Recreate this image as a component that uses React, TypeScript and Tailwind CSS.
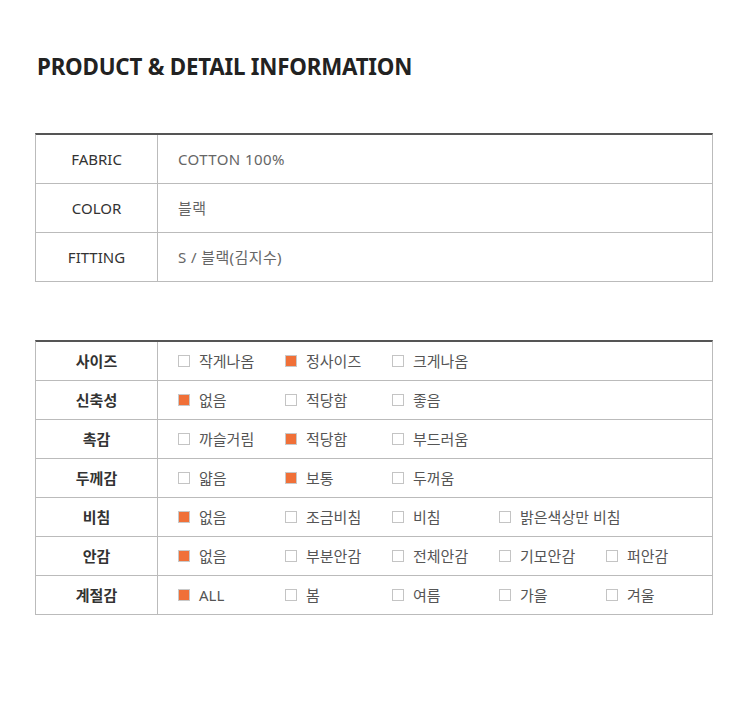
import React from "react";

const INFO = [
  { label: "FABRIC", value: "COTTON 100%" },
  { label: "COLOR", value: "블랙" },
  { label: "FITTING", value: "S / 블랙(김지수)" },
];

const DETAILS: { label: string; options: string[]; checked: number }[] = [
  { label: "사이즈", options: ["작게나옴", "정사이즈", "크게나옴"], checked: 1 },
  { label: "신축성", options: ["없음", "적당함", "좋음"], checked: 0 },
  { label: "촉감", options: ["까슬거림", "적당함", "부드러움"], checked: 1 },
  { label: "두께감", options: ["얇음", "보통", "두꺼움"], checked: 1 },
  { label: "비침", options: ["없음", "조금비침", "비침", "밝은색상만 비침"], checked: 0 },
  { label: "안감", options: ["없음", "부분안감", "전체안감", "기모안감", "퍼안감"], checked: 0 },
  { label: "계절감", options: ["ALL", "봄", "여름", "가을", "겨울"], checked: 0 },
];

const font = "font-['Noto_Sans','Noto_Sans_CJK_KR',sans-serif]";

function Check({ on }: { on: boolean }) {
  return (
    <span
      className={`inline-block shrink-0 w-[12px] h-[12px] border ${
        on ? "bg-[#f07038] border-[#c9c9c9]" : "bg-white border-[#c4c4c4]"
      }`}
    />
  );
}

export default function App() {
  return (
    <div className={`w-[750px] h-[714px] bg-white ${font}`}>
      <div className="px-[35px] pt-[51px]">
        <h1 className="pl-[2px] text-[22.3px] leading-[32px] font-bold text-[#222] tracking-[-0.2px]">
          PRODUCT &amp; DETAIL INFORMATION
        </h1>

        {/* Info table */}
        <div className="mt-[50px] w-[678px] border-t-2 border-[#555] border-x border-x-[#bbb]">
          {INFO.map((row) => (
            <div key={row.label} className="flex h-[49px] border-b border-[#bbb]">
              <div className="w-[122px] shrink-0 border-r border-[#bbb] flex items-center justify-center pt-[1px] text-[15px] text-[#333]">
                {row.label}
              </div>
              <div className="flex items-center pl-[20px] pt-[1px] text-[15px] tracking-[0.4px] text-[#666]">{row.value}</div>
            </div>
          ))}
        </div>

        {/* Detail table */}
        <div className="mt-[58px] w-[678px] border-t-2 border-[#555] border-x border-x-[#bbb]">
          {DETAILS.map((row) => (
            <div key={row.label} className="flex h-[39px] border-b border-[#bbb]">
              <div className="w-[122px] shrink-0 border-r border-[#bbb] flex items-center justify-center text-[15px] font-bold text-[#333]">
                {row.label}
              </div>
              <div className="flex items-center pl-[20px]">
                {row.options.map((opt, i) => (
                  <div key={opt + i} className="w-[107px] shrink-0 flex items-center gap-[9px] text-[15px] text-[#555]">
                    <Check on={i === row.checked} />
                    <span className="whitespace-nowrap">{opt}</span>
                  </div>
                ))}
              </div>
            </div>
          ))}
        </div>
      </div>
    </div>
  );
}
